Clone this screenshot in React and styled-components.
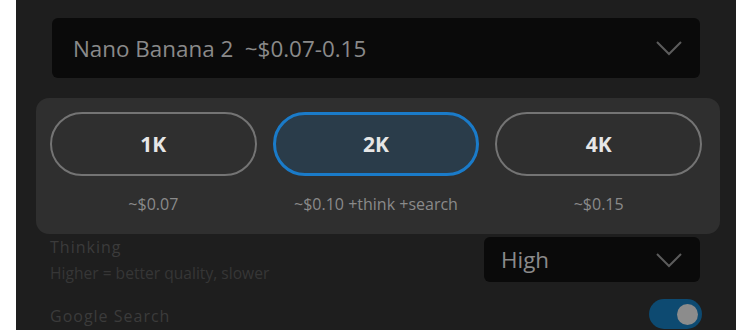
import React, { useState } from 'react'
import styled, { createGlobalStyle } from 'styled-components'

const GlobalStyle = createGlobalStyle`
    html, body {
        margin: 0;
        background: #ffffff;
        font-family: "Open Sans", "Liberation Sans", sans-serif;
    }
`

const tiers = [
    { id: '1K', price: '~$0.07' },
    { id: '2K', price: '~$0.10 +think +search' },
    { id: '4K', price: '~$0.15' },
]

function Chevron() {
    return (
        <svg width="28" height="16" viewBox="0 0 28 16" fill="none">
            <path d="M2 2 L14 14 L26 2" stroke="#5c5c5c" strokeWidth="2" />
        </svg>
    )
}

function App() {
    const [tier, setTier] = useState('2K')
    const [search, setSearch] = useState(true)

    return (
        <>
            <GlobalStyle />
            <Panel>
                <Select>
                    <SelectText>Nano Banana 2&nbsp;&nbsp;~$0.07-0.15</SelectText>
                    <Chevron />
                </Select>

                <Row>
                    <LabelGroup>
                        <Label>Thinking</Label>
                        <Hint>Higher = better quality, slower</Hint>
                    </LabelGroup>
                    <SmallSelect>
                        <SelectText>High</SelectText>
                        <Chevron />
                    </SmallSelect>
                </Row>

                <SearchRow>
                    <Label>Google Search</Label>
                    <Toggle on={search} onClick={() => setSearch(!search)}>
                        <Knob on={search} />
                    </Toggle>
                </SearchRow>

                <Popover>
                    {tiers.map((t) => (
                        <Tier key={t.id}>
                            <TierButton active={tier === t.id} onClick={() => setTier(t.id)}>
                                {t.id}
                            </TierButton>
                            <Price>{t.price}</Price>
                        </Tier>
                    ))}
                </Popover>
            </Panel>
        </>
    )
}
export default App

const Panel = styled.div`
    position: relative;
    margin-left: 16px;
    width: 720px;
    height: 330px;
    box-sizing: border-box;
    background: #1e1e1e;
    padding: 18px 36px 0 36px;
    overflow: hidden;
`
const Select = styled.div`
    height: 60px;
    box-sizing: border-box;
    background: #0a0a0a;
    border-radius: 6px;
    display: flex;
    align-items: center;
    justify-content: space-between;
    padding: 0 17px 0 21px;
`
const SelectText = styled.span`
    font-size: 22.4px;
    color: #8a8a8a;
`
const Row = styled.div`
    margin-top: 159px;
    display: flex;
    justify-content: space-between;
    align-items: flex-start;
`
const LabelGroup = styled.div`
    display: flex;
    flex-direction: column;
    margin-left: -2px;
`
const Label = styled.span`
    font-size: 16px;
    letter-spacing: 1px;
    color: #3b3b3b;
    line-height: 20px;
`
const Hint = styled.span`
    margin-top: 6px;
    font-size: 15.6px;
    color: #363636;
    line-height: 20px;
`
const SmallSelect = styled(Select)`
    width: 216px;
    height: 45px;
    padding: 0 17px 0 17px;
`
const SearchRow = styled.div`
    margin-top: 16px;
    display: flex;
    justify-content: space-between;
    align-items: flex-start;
    margin-left: -2px;
    margin-right: -2px;
    span {
        margin-top: 7px;
    }
`
const Toggle = styled.div`
    width: 53px;
    height: 30px;
    border-radius: 15px;
    background: ${props => props.on ? '#0d4a71' : '#3a3a3a'};
    display: flex;
    align-items: center;
    justify-content: ${props => props.on ? 'flex-end' : 'flex-start'};
    padding: 0 4px;
    box-sizing: border-box;
    cursor: pointer;
`
const Knob = styled.div`
    width: 21px;
    height: 21px;
    border-radius: 50%;
    background: #8c8c8c;
`
const Popover = styled.div`
    position: absolute;
    top: 98px;
    left: 20px;
    width: 684px;
    height: 136px;
    box-sizing: border-box;
    background: #2f2f2f;
    border-radius: 13px;
    padding: 14px 18px 0 14px;
    display: grid;
    grid-template-columns: repeat(3, 1fr);
    gap: 16px;
`
const Tier = styled.div`
    display: flex;
    flex-direction: column;
    align-items: stretch;
`
const TierButton = styled.button`
    height: 64px;
    box-sizing: border-box;
    border-radius: 32px;
    border: ${props => props.active ? '3px solid #1a7bc9' : '2px solid #747474'};
    background: ${props => props.active ? '#2a3c4a' : 'transparent'};
    color: #e6e6e6;
    font-family: inherit;
    font-size: 21px;
    font-weight: 700;
    cursor: pointer;
`
const Price = styled.span`
    margin-top: 17px;
    text-align: center;
    font-size: 16px;
    color: #8a8a8a;
`
